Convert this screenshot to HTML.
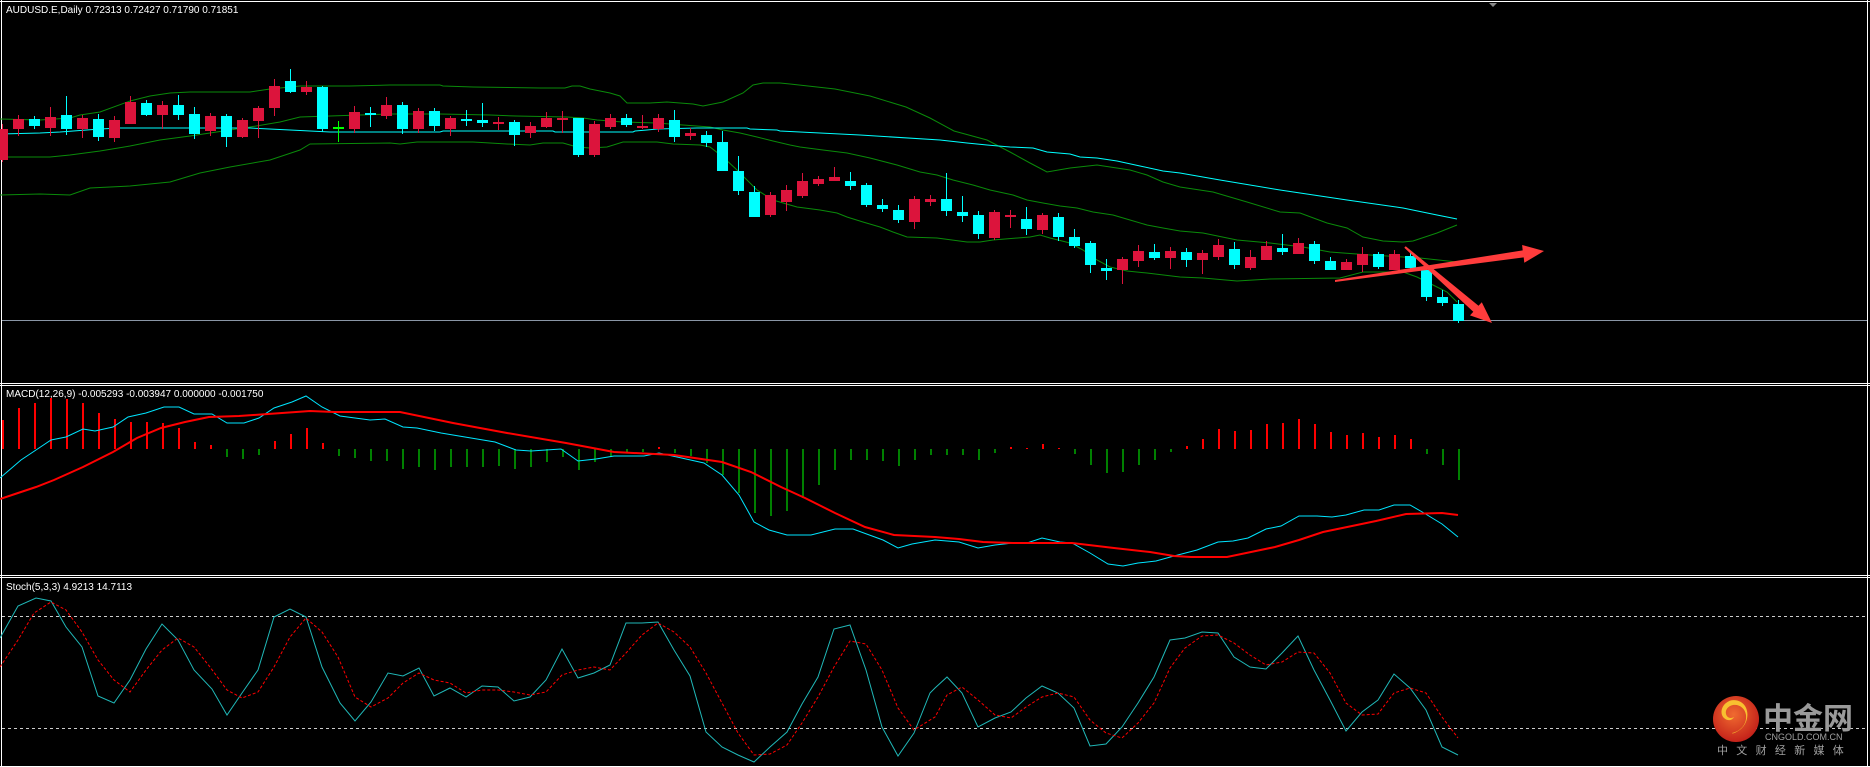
<!DOCTYPE html>
<html><head><meta charset="utf-8"><style>
html,body{margin:0;padding:0;background:#000;width:1870px;height:767px;overflow:hidden}
svg{display:block}
.t{font-family:"Liberation Sans",sans-serif;font-size:10px;fill:#fff}
</style></head><body>
<svg width="1870" height="767" viewBox="0 0 1870 767" xmlns="http://www.w3.org/2000/svg">
<rect width="1870" height="767" fill="#000"/>
<!-- borders -->
<g stroke="#fff" stroke-width="1" fill="none">
<path d="M0 1.5H1870M0 383.5H1870M0 385.5H1870M0 575.5H1870M0 577.5H1870M0 766.5H1870M1.5 0V767M1867.5 0V767"/>
</g>
<polygon points="1489,3 1497,3 1493,7" fill="#888"/>
<text class="t" x="6" y="13">AUDUSD.E,Daily  0.72313 0.72427 0.71790 0.71851</text>
<!-- price line -->
<path d="M2 320.5H1867" stroke="#8a96a6" stroke-width="1"/>
<!-- bands -->
<g fill="none" stroke-width="1">
<polyline stroke="#0a8a0a" points="0,119 40,120 70,118 80,115 100,112 130,101 150,96 170,93 190,92 250,92 270,89 300,86 350,86 390,85 440,85 443,86 473,87 540,88 565,88 572,86 580,86 590,89 600,91 610,93 620,96 627,103 650,103 667,102 693,104 703,106 723,102 743,93 753,85 763,83 780,83 790,84 835,89 870,96 906,107 930,118 954,131 987,140 1010,152 1030,163 1047,172 1070,168 1097,165 1130,170 1147,175 1163,182 1180,187 1213,192 1247,202 1280,212 1300,213 1327,223 1347,228 1363,237 1383,241 1403,242 1413,241 1437,233 1457,225"/>
<polyline stroke="#0a8a0a" points="0,157 50,157 70,155 100,151 130,146 160,140 190,136 230,130 250,127 280,122 300,117 330,116 390,114 440,114 490,115 516,116 567,117 583,118 597,120 623,122 657,123 683,125 710,127 723,130 740,133 757,137 773,141 790,145 800,147 823,150 847,153 870,158 897,165 920,172 937,175 953,180 973,185 990,190 1013,195 1027,200 1043,203 1060,206 1077,208 1093,212 1113,215 1130,220 1147,225 1163,228 1180,231 1203,233 1237,240 1270,243 1303,247 1330,252 1370,255 1420,258 1457,262"/>
<polyline stroke="#0a8a0a" points="0,195 40,194 70,195 90,188 130,186 170,182 200,173 230,167 270,160 300,150 310,144 390,143 400,144 417,142 473,142 507,144 530,145 543,143 563,143 577,147 590,148 607,147 623,142 657,142 673,144 700,145 710,147 723,157 737,170 747,180 757,190 773,200 790,205 797,207 820,210 837,213 847,217 863,222 880,227 893,232 907,237 937,238 967,242 980,242 993,240 1030,237 1040,235 1050,238 1070,243 1083,250 1097,260 1110,267 1127,271 1147,273 1180,277 1203,278 1237,281 1270,279 1340,278 1363,272 1403,272 1417,277 1433,285 1447,292 1457,302"/>
<polyline stroke="#00ffff" points="0,134 40,133 60,132 100,129 120,128 250,128 290,130 330,132 440,132 443,131 553,131 555,132 633,132 635,131 647,130 657,129 697,128 747,128 750,129 777,130 780,131 860,135 940,140 967,143 987,145 1010,147 1033,148 1047,152 1070,154 1080,157 1097,158 1117,161 1140,166 1163,171 1180,173 1220,180 1280,190 1347,200 1403,208 1437,215 1457,219"/>
</g>
<!-- candles -->
<path stroke="#dc143c" stroke-width="1" fill="none" d="M2.5 124V162M18.5 115V136M50.5 107V136M82.5 115V138M114.5 116V142M130.5 96V124M162.5 101V129M210.5 113V136M242.5 118V138M258.5 106V138M274.5 79V116M306.5 81V95M354.5 106V133M386.5 97V119M418.5 108V133M450.5 116V136M498.5 117V130M530.5 122V138M546.5 112V128M562.5 111V133M594.5 121V157M610.5 114V129M642.5 115V129M658.5 114V132M690.5 128V140M770.5 192V217M786.5 185V211M802.5 173V198M818.5 176V186M834.5 167V181M914.5 196V229M930.5 195V206M994.5 210V240M1010.5 210V228M1042.5 213V234M1122.5 257V284M1138.5 245V267M1170.5 247V269M1202.5 250V274M1218.5 239V260M1250.5 250V270M1266.5 241V260M1298.5 238V254M1346.5 259V270M1362.5 247V272M1394.5 250V270"/>
<path fill="#dc143c" d="M-3 129h11v31h-11zM13 119h11v10h-11zM45 117h11v11h-11zM77 118h11v11h-11zM109 120h11v18h-11zM125 102h11v22h-11zM157 105h11v10h-11zM205 116h11v15h-11zM237 120h11v17h-11zM253 108h11v13h-11zM269 86h11v22h-11zM301 87h11v5h-11zM349 112h11v17h-11zM381 105h11v11h-11zM413 111h11v18h-11zM445 118h11v11h-11zM493 122h11v2h-11zM525 126h11v7h-11zM541 118h11v9h-11zM557 118h11v2h-11zM589 124h11v31h-11zM605 118h11v9h-11zM637 126h11v2h-11zM653 118h11v11h-11zM685 133h11v3h-11zM765 195h11v20h-11zM781 190h11v12h-11zM797 181h11v15h-11zM813 179h11v5h-11zM829 177h11v4h-11zM909 199h11v23h-11zM925 199h11v3h-11zM989 212h11v26h-11zM1005 215h11v2h-11zM1037 215h11v15h-11zM1117 259h11v11h-11zM1133 251h11v10h-11zM1165 251h11v7h-11zM1197 253h11v7h-11zM1213 245h11v12h-11zM1245 257h11v11h-11zM1261 246h11v14h-11zM1293 243h11v11h-11zM1341 262h11v8h-11zM1357 254h11v11h-11zM1389 254h11v16h-11z"/>
<path stroke="#00ffff" stroke-width="1" fill="none" d="M34.5 116V129M66.5 96V135M98.5 114V141M146.5 100V116M178.5 95V120M194.5 107V139M226.5 114V147M290.5 69V93M322.5 86V132M370.5 107V127M402.5 102V134M434.5 108V131M466.5 110V126M482.5 103V127M514.5 120V146M578.5 118V157M626.5 114V127M674.5 110V142M706.5 131V147M722.5 131V171M738.5 156V195M754.5 186V217M850.5 172V190M866.5 183V207M882.5 199V212M898.5 205V223M946.5 173V216M962.5 196V222M978.5 211V239M1026.5 207V235M1058.5 213V241M1074.5 229V248M1090.5 241V273M1106.5 259V280M1154.5 244V260M1186.5 248V267M1234.5 242V269M1282.5 234V255M1314.5 241V264M1330.5 257V270M1378.5 252V269M1410.5 253V270M1426.5 270V301M1442.5 290V306M1458.5 300V323"/>
<path fill="#00ffff" d="M29 119h11v7h-11zM61 115h11v14h-11zM93 119h11v18h-11zM141 103h11v12h-11zM173 105h11v10h-11zM189 114h11v20h-11zM221 116h11v21h-11zM285 81h11v11h-11zM317 87h11v42h-11zM365 113h11v2h-11zM397 105h11v24h-11zM429 111h11v15h-11zM461 119h11v2h-11zM477 120h11v3h-11zM509 122h11v13h-11zM573 118h11v37h-11zM621 118h11v7h-11zM669 120h11v17h-11zM701 135h11v8h-11zM717 142h11v29h-11zM733 171h11v20h-11zM749 192h11v25h-11zM845 181h11v5h-11zM861 185h11v20h-11zM877 205h11v4h-11zM893 210h11v10h-11zM941 199h11v12h-11zM957 212h11v4h-11zM973 215h11v19h-11zM1021 219h11v10h-11zM1053 217h11v20h-11zM1069 237h11v9h-11zM1085 243h11v22h-11zM1101 268h11v3h-11zM1149 252h11v6h-11zM1181 252h11v8h-11zM1229 249h11v16h-11zM1277 248h11v4h-11zM1309 244h11v17h-11zM1325 261h11v9h-11zM1373 254h11v13h-11zM1405 256h11v12h-11zM1421 270h11v27h-11zM1437 297h11v6h-11zM1453 304h11v17h-11z"/>
<path stroke="#00ff00" stroke-width="1" d="M338.5 121V142"/>
<rect x="333" y="127" width="11" height="2" fill="#00ff00"/>
<!-- arrows -->
<polygon fill="#ff3c3c" points="1335,280 1522.7,250.4 1522.1,245 1544,251 1524.3,262.8 1523.7,257.4 1335,282"/>
<polygon fill="#ff3c3c" points="1405.7,246.2 1478.5,305.8 1481.8,302.3 1492,323 1470,315.4 1473.3,311.8 1404.3,247.8"/>

<!-- MACD pane -->
<text class="t" x="6" y="397">MACD(12,26,9) -0.005293 -0.003947 0.000000 -0.001750</text>
<path stroke="#ff0000" stroke-width="2" d="M3 449V420M19 449V408M35 449V403M51 449V398M67 449V399M83 449V403M99 449V413M115 449V419M131 449V422M147 449V422M163 449V423M179 449V428M195 449V442M211 449V445M275 449V441M291 449V434M307 449V428M323 449V443M659 449V447M1011 449V447M1027 449V448M1043 449V444M1059 449V448M1187 449V446M1203 449V439M1219 449V429M1235 449V431M1251 449V430M1267 449V424M1283 449V423M1299 449V419M1315 449V424M1331 449V432M1347 449V435M1363 449V433M1379 449V437M1395 449V435M1411 449V439"/>
<path stroke="#008000" stroke-width="2" d="M227 449V457M243 449V459M259 449V455M339 449V456M355 449V458M371 449V461M387 449V461M403 449V469M419 449V467M435 449V470M451 449V467M467 449V467M483 449V467M499 449V466M515 449V469M531 449V467M547 449V462M563 449V457M579 449V470M595 449V462M611 449V457M627 449V453M643 449V452M675 449V453M691 449V456M707 449V463M723 449V475M739 449V493M755 449V513M771 449V516M787 449V511M803 449V498M819 449V485M835 449V470M851 449V460M867 449V460M883 449V461M899 449V466M915 449V460M931 449V455M947 449V455M963 449V455M979 449V460M995 449V453M1075 449V454M1091 449V465M1107 449V473M1123 449V472M1139 449V465M1155 449V460M1171 449V452M1427 449V454M1443 449V465M1459 449V480"/>
<polyline fill="none" stroke="#00e5ff" stroke-width="1" points="0,478 21,460 36,450 51,440 66,437 83,429 95,431 113,427 128,417 146,413 164,407 179,407 194,414 212,414 227,423 244,423 259,418 274,408 292,402 306,396 322,407 340,416 370,420 385,419 403,427 417,428 441,433 465,437 495,442 516,450 531,451 546,450 561,449 578,461 596,459 614,456 644,456 659,453 677,457 704,463 722,475 739,495 754,522 769,530 787,535 811,535 835,529 853,529 883,540 898,548 912,544 935,540 959,542 978,548 995,545 1013,543 1027,543 1042,538 1060,542 1072,543 1090,553 1108,564 1123,566 1138,563 1156,561 1174,556 1197,550 1218,542 1233,541 1248,538 1266,529 1281,526 1299,516 1317,516 1332,517 1346,515 1364,510 1379,510 1394,505 1410,505 1424,513 1442,524 1458,537"/>
<polyline fill="none" stroke="#ff0000" stroke-width="2" points="0,499 18,493 36,487 54,480 83,467 113,452 137,438 161,428 185,422 209,417 239,416 268,414 310,411 334,412 400,412 453,423 507,433 566,443 614,452 674,455 722,462 751,472 781,487 805,498 835,513 865,527 894,535 935,537 959,539 983,542 1013,543 1072,543 1114,548 1150,552 1174,556 1191,557 1227,557 1251,552 1275,547 1299,540 1323,532 1352,526 1376,521 1406,514 1442,513 1458,515"/>

<!-- Stoch pane -->
<text class="t" x="6" y="590">Stoch(5,3,3) 4.9213 14.7113</text>
<path d="M2 616.5H1867M2 728.5H1867" stroke="#ccc" stroke-width="1" stroke-dasharray="3,3"/>
<polyline fill="none" stroke="#20b8b8" stroke-width="1" points="0,638 18,606 36,598 51,601 66,627 82,647 98,696 114,703 130,680 146,649 162,624 178,640 194,670 212,689 227,715 242,693 258,670 274,617 290,609 306,617 322,667 340,703 355,721 371,702 388,673 403,676 419,668 434,696 450,688 466,697 482,686 498,687 514,701 530,697 546,680 562,649 578,678 594,673 610,665 626,623 642,623 658,622 674,650 690,676 706,732 722,747 738,755 754,762 770,747 787,732 802,704 818,677 834,629 850,625 866,670 882,727 898,756 914,733 930,693 935,688 947,677 962,693 978,727 995,718 1011,712 1026,698 1042,686 1058,693 1074,708 1090,746 1106,744 1122,727 1138,703 1154,677 1170,640 1185,638 1202,632 1218,633 1234,657 1250,667 1266,669 1282,653 1298,636 1314,670 1330,700 1346,731 1362,712 1378,700 1394,674 1410,688 1426,710 1442,747 1458,755"/>
<polyline fill="none" stroke="#ff0000" stroke-width="1" stroke-dasharray="3,2" points="0,667 18,640 34,613 51,602 66,610 82,632 98,660 114,680 130,692 146,670 162,650 178,638 194,647 210,667 227,690 242,698 258,692 274,667 290,637 306,618 322,632 338,657 355,697 371,707 388,698 403,683 419,673 434,680 450,683 466,693 482,690 498,690 514,692 530,695 546,692 562,675 578,670 594,667 610,670 626,653 642,635 658,623 674,632 690,647 706,673 722,703 738,733 754,755 770,754 787,745 802,723 818,697 834,667 850,641 866,644 882,670 898,708 914,730 930,720 935,717 947,695 962,687 978,700 995,715 1011,718 1026,707 1042,697 1058,693 1074,697 1090,720 1106,733 1122,738 1138,723 1154,703 1170,668 1185,648 1202,636 1218,635 1234,643 1250,655 1266,665 1282,662 1298,652 1314,653 1330,673 1346,703 1362,715 1378,714 1394,693 1410,688 1426,693 1442,717 1458,738"/>

<!-- logo -->
<defs>
<radialGradient id="lg" cx="0.45" cy="0.4" r="0.6">
<stop offset="0" stop-color="#f06a30"/><stop offset="1" stop-color="#c4221a"/>
</radialGradient>
</defs>
<circle cx="1736" cy="719" r="23" fill="url(#lg)"/>
<path d="M1732 733c9-2 15-9 14-18c-1-7-7-11-13-10c-5 1-8 5-7 9c1 4 5 5 8 3c-2 4-7 4-10 1c-4-4-3-11 2-15c6-5 15-3 19 3c5 8 2 20-7 25c-3 2-6 3-6 2z" fill="#f8c030"/>
<text x="1763" y="729" style="font-family:'Liberation Sans','Noto Sans CJK SC',sans-serif;font-size:30px;font-weight:bold;fill:#9a9a9a">中金网</text>
<text x="1765" y="740" style="font-family:'Liberation Sans',sans-serif;font-size:9px;fill:#a0a0a0">CNGOLD.COM.CN</text>
<text x="1717" y="754" style="font-family:'Liberation Sans','Noto Sans CJK SC',sans-serif;font-size:11px;fill:#a0a0a0;letter-spacing:8.3px">中文财经新媒体</text>
</svg>
</body></html>
